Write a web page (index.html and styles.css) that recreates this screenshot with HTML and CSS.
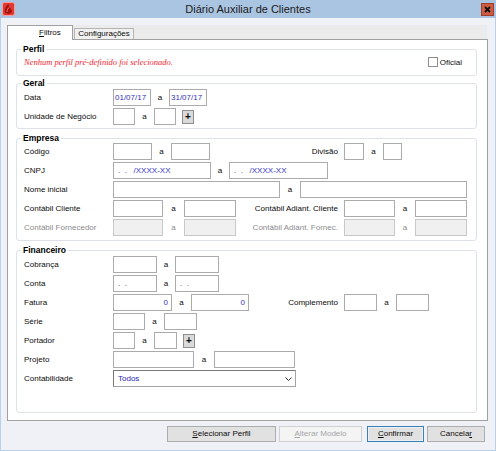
FILE: index.html
```html
<!DOCTYPE html>
<html lang="pt-BR">
<head>
    <meta charset="UTF-8">
    <title>Diário Auxiliar de Clientes</title>
    <link rel="stylesheet" href="styles.css">
</head>
<body>
<div class="window">
    <div class="titlebar">
        <svg class="app-icon" viewBox="0 0 13 14">
            <rect x="0.5" y="0.5" width="12" height="13" rx="2" fill="#e23a32" stroke="#f4a09a"/>
            <path d="M3 11 C2 7 4 3 7 2 C6 5 9 6 10 9 C10 11 8 12 6.5 12 Z" fill="#a8120e"/>
            <path d="M5 10 C5 8 6 6 7.5 5" stroke="#ff8a80" stroke-width="0.8" fill="none"/>
        </svg>
        <span class="title">Diário Auxiliar de Clientes</span>
        <span class="close">
            <svg viewBox="0 0 11 11" width="11" height="11">
                <path d="M3 3 L8 8 M8 3 L3 8" stroke="#111" stroke-width="1.8"/>
            </svg>
        </span>
    </div>

    <div class="tabs">
        <div class="tab active"><u>F</u>iltros</div>
        <div class="tab">Configurações</div>
    </div>

    <div class="page">
        <fieldset class="fs-perfil">
            <legend>Perfil</legend>
            <div class="perfil-row">
                <span class="msg">Nenhum perfil pré-definido foi selecionado.</span>
                <label class="check"><span class="box"></span>Oficial</label>
            </div>
        </fieldset>

        <fieldset class="fs-geral">
            <legend>Geral</legend>
            <div class="rows">
                <div class="row">
                    <span class="lbl">Data</span>
                    <span class="in w38">01/07/17</span>
                    <span class="sep s18">a</span>
                    <span class="in w38">31/07/17</span>
                </div>
                <div class="row">
                    <span class="lbl">Unidade de Negócio</span>
                    <span class="in w22"></span>
                    <span class="sep s19">a</span>
                    <span class="in w22"></span>
                    <span class="plus">+</span>
                </div>
            </div>
        </fieldset>

        <fieldset class="fs-empresa">
            <legend>Empresa</legend>
            <div class="rows">
                <div class="row">
                    <div class="left">
                        <span class="lbl">Código</span>
                        <span class="in w39"></span>
                        <span class="sep s19">a</span>
                        <span class="in w39"></span>
                    </div>
                    <span class="rlbl">Divisão</span>
                    <span class="in w20"></span>
                    <span class="sep s19">a</span>
                    <span class="in w19"></span>
                </div>
                <div class="row">
                    <span class="lbl">CNPJ</span>
                    <span class="in w98 mask">.  .   /XXXX-XX</span>
                    <span class="sep s18">a</span>
                    <span class="in w99 mask">.  .   /XXXX-XX</span>
                </div>
                <div class="row">
                    <span class="lbl">Nome inicial</span>
                    <span class="in w167"></span>
                    <span class="sep s20">a</span>
                    <span class="in w167"></span>
                </div>
                <div class="row">
                    <div class="left">
                        <span class="lbl">Contábil Cliente</span>
                        <span class="in w50"></span>
                        <span class="sep s21">a</span>
                        <span class="in w52"></span>
                    </div>
                    <span class="rlbl">Contábil Adiant. Cliente</span>
                    <span class="in w51"></span>
                    <span class="sep s20">a</span>
                    <span class="in w52"></span>
                </div>
                <div class="row disabled">
                    <div class="left">
                        <span class="lbl">Contábil Fornecedor</span>
                        <span class="in w50"></span>
                        <span class="sep s21">a</span>
                        <span class="in w52"></span>
                    </div>
                    <span class="rlbl">Contábil Adiant. Fornec.</span>
                    <span class="in w51"></span>
                    <span class="sep s20">a</span>
                    <span class="in w52"></span>
                </div>
            </div>
        </fieldset>

        <fieldset class="fs-financeiro">
            <legend>Financeiro</legend>
            <div class="rows">
                <div class="row">
                    <span class="lbl">Cobrança</span>
                    <span class="in w44"></span>
                    <span class="sep s18">a</span>
                    <span class="in w44"></span>
                </div>
                <div class="row">
                    <span class="lbl">Conta</span>
                    <span class="in w44 mask">.  .</span>
                    <span class="sep s18">a</span>
                    <span class="in w44 mask">.  .</span>
                </div>
                <div class="row">
                    <div class="left">
                        <span class="lbl">Fatura</span>
                        <span class="in w59 num">0</span>
                        <span class="sep s19">a</span>
                        <span class="in w58 num">0</span>
                    </div>
                    <span class="rlbl">Complemento</span>
                    <span class="in w33"></span>
                    <span class="sep s19">a</span>
                    <span class="in w33"></span>
                </div>
                <div class="row">
                    <span class="lbl">Série</span>
                    <span class="in w32"></span>
                    <span class="sep s19">a</span>
                    <span class="in w33"></span>
                </div>
                <div class="row">
                    <span class="lbl">Portador</span>
                    <span class="in w22"></span>
                    <span class="sep s19">a</span>
                    <span class="in w23"></span>
                    <span class="plus">+</span>
                </div>
                <div class="row">
                    <span class="lbl">Projeto</span>
                    <span class="in w81"></span>
                    <span class="sep s20">a</span>
                    <span class="in w81"></span>
                </div>
                <div class="row">
                    <span class="lbl">Contabilidade</span>
                    <span class="combo">
                        <span>Todos</span>
                        <svg viewBox="0 0 7 4" width="7" height="4">
                            <path d="M0.5 0.5 L3.5 3.5 L6.5 0.5" stroke="#333" stroke-width="1" fill="none"/>
                        </svg>
                    </span>
                </div>
            </div>
        </fieldset>
    </div>

    <div class="buttons">
        <button class="btn b-sel"><u>S</u>elecionar Perfil</button>
        <button class="btn b-alt" disabled><u>A</u>lterar Modelo</button>
        <button class="btn b-conf"><u>C</u>onfirmar</button>
        <button class="btn b-canc">Cancela<u>r</u></button>
    </div>
</div>
</body>
</html>
```

FILE: styles.css
```css
body {
    margin: 0;
    font-family: "Liberation Sans", Arial, sans-serif;
    font-size: 8px;
    color: #0c0c0c;
}

/* Window frame */
.window {
    width: 496px;
    height: 451px;
    box-sizing: border-box;
    background: #f0f0f7;
    border: 1px solid #b9d1ea;
    border-top: 0;
}

.titlebar {
    height: 18px;
    margin: 0 -1px;
    background: #aac5e2;
    display: flex;
    align-items: center;
}

.app-icon {
    width: 13px;
    height: 14px;
    margin-left: 2px;
}

.title {
    flex: 1;
    text-align: center;
    font-size: 11px;
    color: #1a1a1a;
}

.close {
    width: 13px;
    height: 13px;
    margin-right: 2px;
    box-sizing: border-box;
    background: #cd5a43;
    border: 1px solid #a13f2c;
    display: flex;
    align-items: center;
    justify-content: center;
}

/* Tabs */
.tabs {
    display: flex;
    align-items: flex-end;
    width: 480px;
    height: 14px;
    margin: 7px 0 0 6px;
    background: #ebebeb;
}

.tab {
    box-sizing: border-box;
    height: 11px;
    width: 60px;
    margin-left: 1px;
    background: #f0f0f0;
    border: 1px solid #b4b4b4;
    border-bottom: 0;
    line-height: 10px;
    text-align: center;
}

.tab.active {
    position: relative;
    width: 66px;
    height: 15px;
    margin: 0 0 -1px 0;
    padding-left: 31px;
    background: #fff;
    border-color: #a0a0a0;
    line-height: 14px;
    text-align: left;
}

.page {
    width: 481px;
    height: 382px;
    margin-left: 6px;
    box-sizing: border-box;
    padding: 4px 0 0 8px;
    background: #fff;
    border: 1px solid #a0a0a0;
}

/* Group boxes */
fieldset {
    width: 461px;
    box-sizing: border-box;
    margin: 0;
    padding: 0 7px;
    border: 1px solid #dde2ea;
    border-radius: 3px;
}

legend {
    font-weight: bold;
    font-size: 8.5px;
    line-height: 10px;
    padding: 0 2px;
    margin-left: -3px;
    color: #000;
}

.fs-perfil { padding-bottom: 5px; }
.fs-geral { margin-top: 2px; padding-top: 1px; padding-bottom: 3px; }
.fs-empresa { margin-top: 4px; padding-bottom: 4px; }
.fs-financeiro { margin-top: 4px; padding-top: 1px; padding-bottom: 25px; }

.perfil-row {
    height: 16px;
    display: flex;
    align-items: center;
}

.msg {
    font-family: "Liberation Serif", "Times New Roman", serif;
    font-style: italic;
    font-size: 8.5px;
    color: #f41e30;
}

.check {
    margin-left: auto;
    margin-right: 7px;
    display: flex;
    align-items: center;
}

.check .box {
    width: 10px;
    height: 10px;
    box-sizing: border-box;
    margin-right: 2px;
    border: 1px solid #8f8f8f;
    background: #fff;
}

/* Form rows */
.rows {
    display: flex;
    flex-direction: column;
    gap: 2px;
}

.row, .left {
    display: flex;
    align-items: center;
    height: 17px;
}

.left { width: 226px; flex: none; }

.lbl { width: 89px; flex: none; }

.rlbl {
    width: 88px;
    margin-right: 6px;
    flex: none;
    text-align: right;
}

.in {
    flex: none;
    box-sizing: border-box;
    height: 17px;
    padding: 0 1px;
    border: 1px solid #ababab;
    background: #fff;
    color: #3434c8;
    line-height: 15px;
    white-space: pre;
    overflow: hidden;
}

.in.mask { padding-left: 4px; }
.in.num { text-align: right; padding-right: 3px; }

.disabled { color: #8c8c8c; }
.disabled .in {
    background: #f0f0f0;
    border-color: #c8c8c8;
}

.sep { flex: none; text-align: center; }
.s18 { width: 18px; }
.s19 { width: 19px; }
.s20 { width: 20px; }
.s21 { width: 21px; }

.w19 { width: 19px; }
.w20 { width: 20px; }
.w22 { width: 22px; }
.w23 { width: 23px; }
.w32 { width: 32px; }
.w33 { width: 33px; }
.w38 { width: 38px; }
.w39 { width: 39px; }
.w44 { width: 44px; }
.w50 { width: 50px; }
.w51 { width: 51px; }
.w52 { width: 52px; }
.w58 { width: 58px; }
.w59 { width: 59px; }
.w81 { width: 81px; }
.w98 { width: 98px; }
.w99 { width: 99px; }
.w167 { width: 167px; }

.plus {
    width: 12px;
    height: 14px;
    box-sizing: border-box;
    margin-left: 6px;
    background: #dadada;
    border: 1px solid #8e8e8e;
    font-weight: bold;
    font-size: 10px;
    line-height: 11px;
    text-align: center;
}

.combo {
    width: 183px;
    height: 17px;
    box-sizing: border-box;
    padding: 0 3px 0 4px;
    display: flex;
    align-items: center;
    justify-content: space-between;
    border: 1px solid #a3a3a3;
    border-top-color: #7a7a7a;
    border-left-color: #7a7a7a;
    color: #2a2ab8;
}

/* Dialog buttons */
.buttons {
    display: flex;
    justify-content: flex-end;
    margin-top: 5px;
    padding-right: 10px;
}

.btn {
    height: 16px;
    box-sizing: border-box;
    padding: 0;
    font-family: "Liberation Sans", Arial, sans-serif;
    font-size: 8px;
    line-height: 14px;
    color: #0c0c0c;
    background: #e1e1e1;
    border: 1px solid #adadad;
    border-radius: 0;
}

.b-sel { width: 109px; }
.b-alt {
    width: 83px;
    margin-left: 3px;
    background: #f4f4f4;
    border-color: #d0d0d0;
    color: #a6a6a6;
}
.b-conf {
    width: 57px;
    margin-left: 5px;
    border-color: #3c7fb1;
    box-shadow: inset 0 0 0 1px #e8f0f8;
}
.b-canc { width: 58px; margin-left: 3px; }
```
